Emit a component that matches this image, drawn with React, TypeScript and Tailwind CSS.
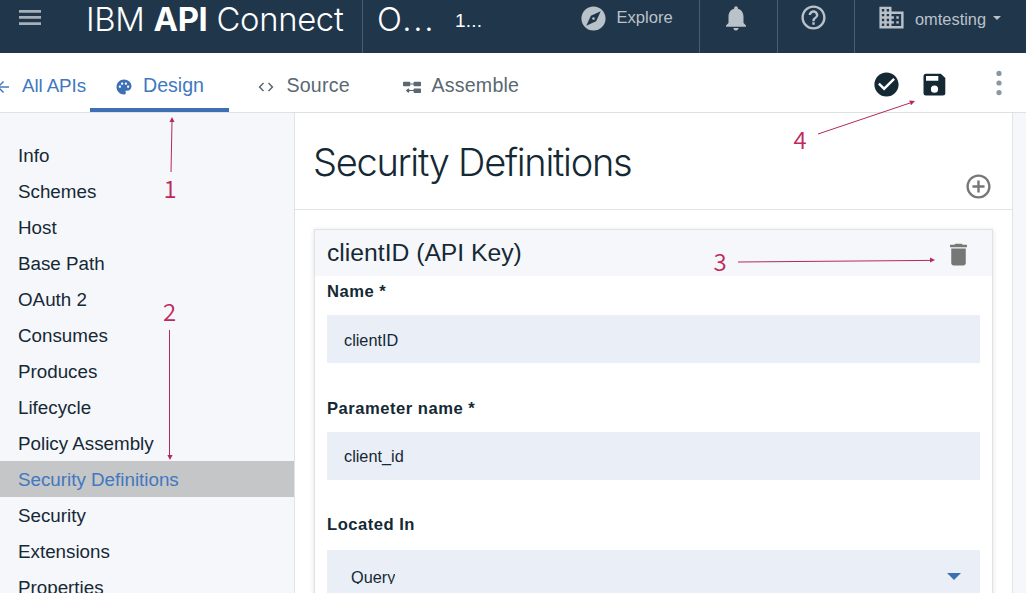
import type { ReactNode } from "react";
import {
  MdAddCircleOutline,
  MdArrowBack,
  MdBusiness,
  MdCheckCircle,
  MdCode,
  MdDelete,
  MdExplore,
  MdHelpOutline,
  MdNotifications,
  MdPalette,
} from "react-icons/md";

const sections = [
  "Info", "Schemes", "Host", "Base Path", "OAuth 2", "Consumes", "Produces",
  "Lifecycle", "Policy Assembly", "Security Definitions", "Security", "Extensions", "Properties",
];

function AssembleIcon() {
  return (
    <svg className="h-3 w-[18px] shrink-0" viewBox="0 0 18 12" fill="currentColor">
      <rect x="0" y="0.7" width="7.2" height="4.6" rx="0.8" />
      <rect x="10.6" y="0.7" width="7.4" height="4.6" rx="0.8" />
      <path d="M7 2.5h4v1H7zM5.2 9.1h6v1h-6z" />
      <path d="M2.8 9.6 5.4 7.3 7 9.6 5.4 11.9z" />
      <rect x="10.6" y="7.4" width="7.4" height="4.6" rx="0.8" />
    </svg>
  );
}

function SaveIcon() {
  return (
    <svg className="h-[23px] w-[23px]" viewBox="0 0 23 23">
      <path fillRule="evenodd" fill="#152935" d="M3 .7h14.8L22.3 5v15a2.5 2.5 0 0 1-2.5 2.5H3A2.5 2.5 0 0 1 .5 20V3.2A2.5 2.5 0 0 1 3 .7zM3 3v4.8h12.3V3zM11.5 12.6a3.6 3.6 0 1 0 0 7.2 3.6 3.6 0 0 0 0-7.2z" />
    </svg>
  );
}

function TopBar() {
  return (
    <header className="flex h-[53px] shrink-0 bg-[#20364b] text-[#bac2c9]">
      <div className="flex w-[363px] border-r border-[#4b5e6e]">
        <svg className="mt-[10px] ml-[19px] h-[15px] w-[22px] shrink-0" viewBox="0 0 22 15" fill="#a6b0b8">
          <path d="M0 0h22v2.7H0zM0 6.1h22v2.7H0zM0 12.2h22v2.7H0z" />
        </svg>
        <div className="ml-[45px] whitespace-nowrap font-['Inter',sans-serif] text-[32.8px] leading-[38px] font-light tracking-[-0.3px] text-white">
          IBM <span className="font-bold">API</span> Connect
        </div>
      </div>
      <div className="flex w-[337px] border-r border-[#4b5e6e]">
        <div className="ml-[14px] w-[57px] whitespace-nowrap font-['Inter',sans-serif] text-[32.8px] leading-[38px] font-light tracking-[1.8px] text-white">O...</div>
        <div className="mt-[9px] ml-[21px] w-[27px] text-[19px] leading-6 tracking-[0.2px] text-white">1...</div>
        <MdExplore className="mt-[4px] ml-[97px] h-[29px] w-[29px]" />
        <div className="mt-[6px] ml-[8.5px] text-[16.6px] leading-6">Explore</div>
      </div>
      <div className="w-[78px] border-r border-[#4b5e6e]">
        <MdNotifications className="mt-[3px] ml-[21px] h-[30px] w-[30px]" />
      </div>
      <div className="w-[77px] border-r border-[#4b5e6e]">
        <MdHelpOutline className="mt-[3px] ml-[21px] h-[29px] w-[29px]" />
      </div>
      <div className="flex">
        <MdBusiness className="mt-[3px] ml-[21.5px] h-[29px] w-[29px]" />
        <div className="mt-[7px] ml-[9.5px] text-[16.4px] leading-6">omtesting</div>
        <svg className="mt-[16px] ml-[6.5px] h-[4px] w-2" viewBox="0 0 8 4" fill="currentColor"><path d="M0 0h8L4 4z" /></svg>
      </div>
    </header>
  );
}

function Tabs() {
  return (
    <nav className="flex h-[60px] shrink-0 items-start border-b border-[#dfe0e1] bg-white text-[19.6px] leading-6 text-[#5a6872]">
      <div className="flex h-full w-[90px] pt-[21px] text-[#4178be]">
        <MdArrowBack className="mt-[4px] -ml-[6px] h-[18px] w-[18px] shrink-0" />
        <span className="ml-[10px] whitespace-nowrap text-[18.8px] tracking-[-0.1px]">All APIs</span>
      </div>
      <div className="flex h-[59px] w-[139px] border-b-4 border-[#3d70b2] pt-[20px] text-[#3d70b2]">
        <MdPalette className="mt-[5px] ml-[25px] h-[18px] w-[18px]" />
        <span className="ml-[10px] text-[#4178be]">Design</span>
      </div>
      <div className="flex w-[152px] pt-[20px]">
        <MdCode className="mt-[5px] ml-[28px] h-[18px] w-[18px]" />
        <span className="ml-[11.5px] tracking-[0.2px]">Source</span>
      </div>
      <div className="flex w-[492px] pt-[20px]">
        <span className="mt-[8px] ml-[22px]"><AssembleIcon /></span>
        <span className="ml-[10.5px] tracking-[0.2px]">Assemble</span>
      </div>
      <MdCheckCircle className="mt-[17px] -ml-[1px] h-[29px] w-[29px] text-[#152935]" />
      <div className="mt-[20px] ml-[22px]"><SaveIcon /></div>
      <svg className="mt-[17px] ml-[50px] h-[26px] w-[6px]" viewBox="0 0 6 26" fill="#8897a2">
        <circle cx="3" cy="3.4" r="2.6" /><circle cx="3" cy="13" r="2.6" /><circle cx="3" cy="22.6" r="2.6" />
      </svg>
    </nav>
  );
}

function Sidebar() {
  return (
    <aside className="w-[295px] shrink-0 border-r border-[#dfe3e6] bg-[#f5f7fb] pt-[24px] text-[18.8px] leading-[38px] text-[#152935]">
      {sections.map((name) => (
        <div key={name} className={name === "Security Definitions" ? "h-9 bg-[#c5c6c7] pl-[18px] text-[#4178be]" : "h-9 pl-[18px]"}>
          {name}
        </div>
      ))}
    </aside>
  );
}

function Label({ children }: { children: ReactNode }) {
  return <div className="text-[16.6px] leading-6 font-bold tracking-[0.5px]">{children}</div>;
}

function Annotations() {
  return (
    <div className="pointer-events-none absolute inset-0 font-['Noto_Sans_CJK_JP',sans-serif] text-[24px] leading-6 font-[350] text-[#c0285c]">
      <svg className="absolute inset-0" width="1026" height="593" viewBox="0 0 1026 593" fill="#b5295b" stroke="#b5295b">
        <path d="M171 172 172 121M169.5 330V455M738 262 930 260.4M818 134 910 103" fill="none" strokeWidth="1" />
        <path stroke="none" d="M172 117l2.5 5h-5zM170 460l-2.6-5h5.2zM935 260l-5 2.6v-5.2zM915 101l-4 4.2-1.8-4.8z" />
      </svg>
      <span className="absolute top-[176px] left-[163.5px]">1</span>
      <span className="absolute top-[299px] left-[163px]">2</span>
      <span className="absolute top-[249px] left-[713.5px]">3</span>
      <span className="absolute top-[127px] left-[793.5px]">4</span>
    </div>
  );
}

export default function App() {
  return (
    <div className="relative flex h-[593px] w-[1026px] flex-col overflow-hidden bg-white font-['Liberation_Sans',Arial,sans-serif] text-[#152935]">
      <TopBar />
      <Tabs />
      <div className="flex min-h-0 flex-1">
        <Sidebar />
        <main className="w-[718px] shrink-0 border-r border-[#dfe3ea] bg-white">
          <div className="flex h-[97px] justify-between border-b border-[#dfe3e6]">
            <h1 className="mt-[25px] ml-[18px] font-['Inter',sans-serif] text-[38px] leading-[48px] font-light tracking-[-1.27px]">Security Definitions</h1>
            <MdAddCircleOutline className="mt-[59px] mr-[19px] h-[29px] w-[29px] text-[#777]" />
          </div>
          <section className="mt-[19px] ml-[19px] h-[500px] w-[679px] border border-[#e0e3e5] shadow-[0_1px_5px_rgba(0,0,0,0.12)]">
            <div className="flex h-[46px] justify-between bg-[#f5f7fb]">
              <h2 className="mt-[8px] ml-3 text-[24.7px] leading-[30px]">clientID (API Key)</h2>
              <MdDelete className="mt-[10px] mr-[19.5px] h-[29px] w-[29px] text-[#777]" />
            </div>
            <div className="px-3 pt-[4px]">
              <Label>Name *</Label>
              <div className="mt-[11px] h-12 bg-[#eaeff7] pl-[17px] text-[16.3px] leading-[51px]">clientID</div>
              <div className="mt-[34px]"><Label>Parameter name *</Label></div>
              <div className="mt-[11px] h-12 bg-[#eaeff7] pl-[17px] text-[16.3px] leading-[49px]">client_id</div>
              <div className="mt-[33px]"><Label>Located In</Label></div>
              <div className="mt-[13px] flex h-[60px] justify-between bg-[#eaeff7] pt-[15px] pr-[19px] pl-[24px]">
                <span className="h-[19px] overflow-hidden text-[16.3px] leading-6">Query</span>
                <svg className="mt-[8px] h-[7px] w-[14px]" viewBox="0 0 14 7" fill="#3d70b2"><path d="M0 0h14L7 7z" /></svg>
              </div>
            </div>
          </section>
        </main>
        <div className="flex-1 bg-[#f5f7fb]" />
      </div>
      <Annotations />
    </div>
  );
}
